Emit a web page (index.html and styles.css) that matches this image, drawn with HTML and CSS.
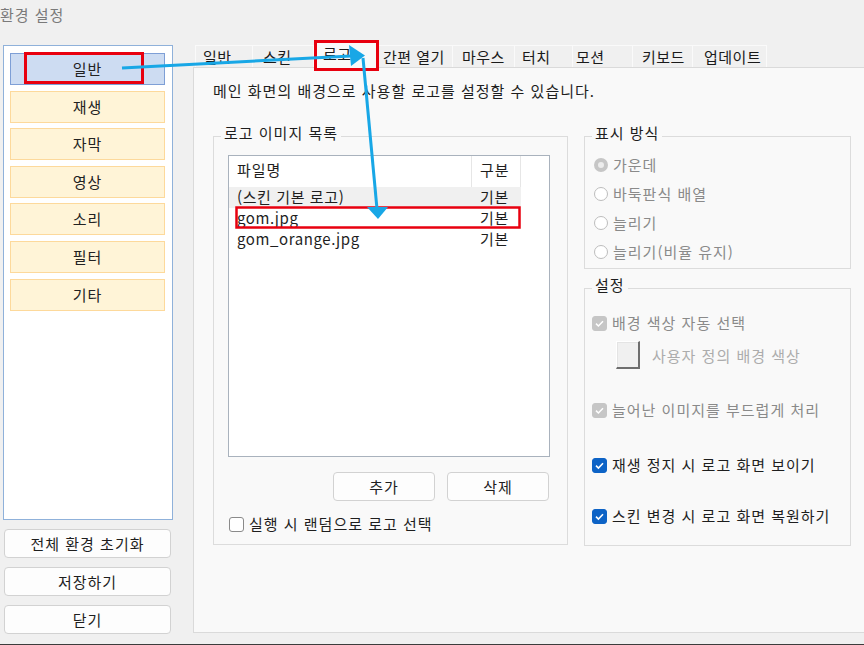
FILE: index.html
```html
<!DOCTYPE html>
<html lang="ko">
<head>
<meta charset="utf-8">
<title>환경 설정</title>
<link rel="stylesheet" href="styles.css">
</head>
<body>
<div class="title">환경 설정</div>
<div class="main">
  <div class="side">
    <nav class="nav">
      <div class="nav-item selected">일반</div>
      <div class="nav-item">재생</div>
      <div class="nav-item">자막</div>
      <div class="nav-item">영상</div>
      <div class="nav-item">소리</div>
      <div class="nav-item">필터</div>
      <div class="nav-item">기타</div>
    </nav>
    <div class="side-buttons">
      <button class="btn side-btn">전체 환경 초기화</button>
      <button class="btn side-btn">저장하기</button>
      <button class="btn side-btn">닫기</button>
    </div>
  </div>
  <div class="content">
    <div class="tabs">
      <div class="tab t-general">일반</div>
      <div class="tab t-skin">스킨</div>
      <div class="tab t-logo active">로고</div>
      <div class="tab t-quick">간편 열기</div>
      <div class="tab t-mouse">마우스</div>
      <div class="tab t-touch">터치</div>
      <div class="tab t-motion">모션</div>
      <div class="tab t-key">키보드</div>
      <div class="tab t-update">업데이트</div>
    </div>
    <div class="panel">
      <p class="desc">메인 화면의 배경으로 사용할 로고를 설정할 수 있습니다.</p>
      <div class="groups">
        <fieldset class="group list-group">
          <legend>로고 이미지 목록</legend>
          <div class="list">
            <div class="list-head">
              <div class="cell">파일명</div>
              <div class="cell">구분</div>
            </div>
            <div class="row alt">
              <div class="cell">(스킨 기본 로고)</div>
              <div class="cell">기본</div>
            </div>
            <div class="row">
              <div class="cell">gom.jpg</div>
              <div class="cell">기본</div>
            </div>
            <div class="row">
              <div class="cell">gom_orange.jpg</div>
              <div class="cell">기본</div>
            </div>
          </div>
          <div class="list-buttons">
            <button class="btn list-btn">추가</button>
            <button class="btn list-btn">삭제</button>
          </div>
          <div class="check random-check"><span class="box"></span>실행 시 랜덤으로 로고 선택</div>
        </fieldset>
        <div class="right-col">
          <fieldset class="group display-group">
            <legend>표시 방식</legend>
            <div class="radio-row first"><span class="radio on"></span>가운데</div>
            <div class="radio-row"><span class="radio"></span>바둑판식 배열</div>
            <div class="radio-row"><span class="radio"></span>늘리기</div>
            <div class="radio-row"><span class="radio"></span>늘리기(비율 유지)</div>
          </fieldset>
          <fieldset class="group settings-group">
            <legend>설정</legend>
            <div class="check dis s1"><span class="box filled-dis"><svg viewBox="0 0 15 15" width="15" height="15"><path d="M4 7.6l2.4 2.4 4.6-4.8" stroke="#fff" stroke-width="1.5" fill="none"/></svg></span>배경 색상 자동 선택</div>
            <div class="color-row"><span class="color-btn"></span>사용자 정의 배경 색상</div>
            <div class="check dis s2"><span class="box filled-dis"><svg viewBox="0 0 15 15" width="15" height="15"><path d="M4 7.6l2.4 2.4 4.6-4.8" stroke="#fff" stroke-width="1.5" fill="none"/></svg></span>늘어난 이미지를 부드럽게 처리</div>
            <div class="check s3"><span class="box filled"><svg viewBox="0 0 15 15" width="15" height="15"><path d="M4 7.6l2.4 2.4 4.6-4.8" stroke="#fff" stroke-width="1.6" fill="none"/></svg></span>재생 정지 시 로고 화면 보이기</div>
            <div class="check s4"><span class="box filled"><svg viewBox="0 0 15 15" width="15" height="15"><path d="M4 7.6l2.4 2.4 4.6-4.8" stroke="#fff" stroke-width="1.6" fill="none"/></svg></span>스킨 변경 시 로고 화면 복원하기</div>
          </fieldset>
        </div>
      </div>
    </div>
  </div>
</div>
<div class="bottom-line"></div>
<svg class="annot" width="864" height="645" viewBox="0 0 864 645">
  <rect x="25.5" y="53.5" width="117" height="29" fill="none" stroke="#e8000f" stroke-width="3"/>
  <rect x="315.5" y="41.5" width="62" height="28" fill="none" stroke="#e8000f" stroke-width="3"/>
  <rect x="236.5" y="207.5" width="283" height="20" fill="none" stroke="#e8000f" stroke-width="2.5"/>
  <line x1="122" y1="68" x2="351" y2="56" stroke="#18a7e6" stroke-width="3"/>
  <polygon points="365,55.5 349,45 351,66" fill="#18a7e6"/>
  <line x1="363" y1="58" x2="377" y2="209" stroke="#18a7e6" stroke-width="3"/>
  <polygon points="378,219 367,207 388,207" fill="#18a7e6"/>
</svg>
</body>
</html>
```
FILE: styles.css
```css
* { box-sizing: border-box; }
html, body { margin: 0; padding: 0; }
body {
  width: 864px;
  height: 645px;
  overflow: hidden;
  background: #f0f0f0;
  font-family: "Noto Sans CJK KR", "Noto Sans", sans-serif;
  font-size: 15px;
  letter-spacing: 1px;
  color: #1e1e1e;
  position: relative;
  display: flex;
  flex-direction: column;
}
.title {
  height: 30px;
  line-height: 30px;
  margin-left: 0;
  color: #7a7a7a;
}
.main {
  display: flex;
  height: 614px;
  padding-left: 3px;
}
.side {
  width: 170px;
  display: flex;
  flex-direction: column;
  padding-top: 15px;
}
.nav {
  height: 475px;
  background: #fff;
  border: 1px solid #8fb1da;
  padding: 7px 7px 0 6px;
  display: flex;
  flex-direction: column;
  gap: 5.6px;
}
.nav-item {
  height: 32px;
  line-height: 30px;
  text-align: center;
  background: #fff4d7;
  border: 1px solid #fdd99b;
  color: #222;
}
.nav-item.selected {
  background: #cddcf2;
  border-color: #7e9fd6;
}
.side-buttons {
  margin-top: 9px;
  margin-left: 1px;
  display: flex;
  flex-direction: column;
  gap: 9px;
}
.btn {
  font-family: inherit;
  font-size: 15px;
  letter-spacing: 1px;
  color: #1e1e1e;
  background: #fdfdfd;
  border: 1px solid #d2d2d2;
  border-radius: 4px;
  padding: 0;
}
.side-btn {
  width: 167px;
  height: 29px;
}
.content {
  margin-left: 20px;
  flex: 1;
  padding-top: 11px;
  display: flex;
  flex-direction: column;
}
.tabs {
  display: flex;
  height: 26px;
  align-items: flex-end;
  padding-left: 2px;
}
.tab {
  height: 22px;
  line-height: 21px;
  background: #f0f0f0;
  border-top: 1px solid #fafafa;
  border-right: 1px solid #fafafa;
  color: #1a1a1a;
  white-space: nowrap;
  letter-spacing: 0.5px;
}
.t-general { width: 58px; padding-left: 7px; border-left: 1px solid #fafafa; }
.t-skin { width: 61px; padding-left: 10px; }
.t-logo { width: 65px; padding-left: 8px; }
.t-quick { width: 74px; padding-left: 4px; }
.t-mouse { width: 62px; padding-left: 9px; }
.t-touch { width: 58px; padding-left: 7px; }
.t-motion { width: 60px; padding-left: 3px; }
.t-key { width: 60px; padding-left: 9px; }
.t-update { width: 74px; padding-left: 11px; }
.tab.active {
  height: 27px;
  line-height: 24px;
  margin-bottom: -1px;
  background: #f9f9f9;
  border: 1px solid #dadada;
  border-bottom: none;
  position: relative;
  z-index: 1;
}
.panel {
  height: 566px;
  background: #f9f9f9;
  border: 1px solid #dadada;
  border-right: none;
  padding: 13px 0 0 19px;
}
.desc {
  margin: 0;
  line-height: 20px;
  color: #1e1e1e;
}
.groups {
  display: flex;
  gap: 16px;
  margin-top: 22px;
}
.group {
  margin: 0;
  padding: 0;
  border: 1px solid #dcdcdc;
  min-width: 0;
}
.group legend {
  margin-left: 7px;
  padding: 0 3px 6px;
  line-height: 20px;
  color: #1e1e1e;
}
.list-group {
  width: 355px;
  height: 422px;
}
.list {
  margin: 6px 0 0 14px;
  width: 322px;
  height: 302px;
  background: #fff;
  border: 1px solid #a9b2bd;
}
.list-head {
  display: grid;
  grid-template-columns: 243px 49px;
  height: 31px;
}
.list-head .cell {
  border-right: 1px solid #e6e6e6;
  padding-left: 8px;
  line-height: 28px;
}
.row {
  display: grid;
  grid-template-columns: 243px 49px;
  height: 21px;
}
.row .cell {
  padding-left: 8px;
  line-height: 20px;
  white-space: nowrap;
  letter-spacing: 0.6px;
}
.row.alt .cell {
  background: #f0f0f0;
}
.list-buttons {
  display: flex;
  justify-content: flex-end;
  gap: 12px;
  margin: 15px 0 0 14px;
  width: 321px;
}
.list-btn {
  width: 102px;
  height: 29px;
}
.check {
  display: flex;
  align-items: center;
  gap: 5px;
  height: 20px;
  line-height: 20px;
  white-space: nowrap;
}
.box {
  width: 15px;
  height: 15px;
  border: 1px solid #8a8a8a;
  border-radius: 3px;
  background: #fff;
  flex: none;
  display: flex;
}
.box svg { display: block; margin: -1px; }
.box.filled-dis {
  background: #c6c6c6;
  border-color: #c6c6c6;
}
.box.filled {
  background: #0d63c6;
  border-color: #0d63c6;
}
.random-check {
  margin: 13px 0 0 15px;
}
.right-col {
  width: 267px;
  display: flex;
  flex-direction: column;
}
.display-group {
  height: 146px;
}
.radio-row {
  display: flex;
  align-items: center;
  gap: 5px;
  height: 29px;
  padding-left: 9px;
  color: #8a8a8a;
  white-space: nowrap;
}
.radio-row.first { margin-top: 1px; }
.radio {
  width: 14px;
  height: 14px;
  border-radius: 50%;
  border: 1px solid #bdbdbd;
  background: #fff;
  flex: none;
}
.radio.on {
  border: 4px solid #c6c6c6;
  background: #ececec;
}
.settings-group {
  margin-top: 6px;
  height: 271px;
}
.settings-group .check {
  padding-left: 7px;
}
.check.dis { color: #8a8a8a; }
.s1 { margin-top: 12px; }
.s2 { margin-top: 31px; }
.s3 { margin-top: 35px; }
.s4 { margin-top: 31px; }
.color-row {
  display: flex;
  align-items: center;
  gap: 12px;
  margin: 8px 0 0 31px;
  color: #acacac;
  white-space: nowrap;
}
.color-btn {
  width: 24px;
  height: 28px;
  background: #f0f0f0;
  border-style: solid;
  border-width: 1px 2px 2px 1px;
  border-color: #ffffff #6e6e6e #6e6e6e #ffffff;
  box-shadow: inset 1px 1px 0 #e4e4e4;
  flex: none;
}
.bottom-line {
  height: 1px;
  background: #3c3c3c;
}
.annot {
  position: absolute;
  left: 0;
  top: 0;
  z-index: 10;
  pointer-events: none;
}
```
